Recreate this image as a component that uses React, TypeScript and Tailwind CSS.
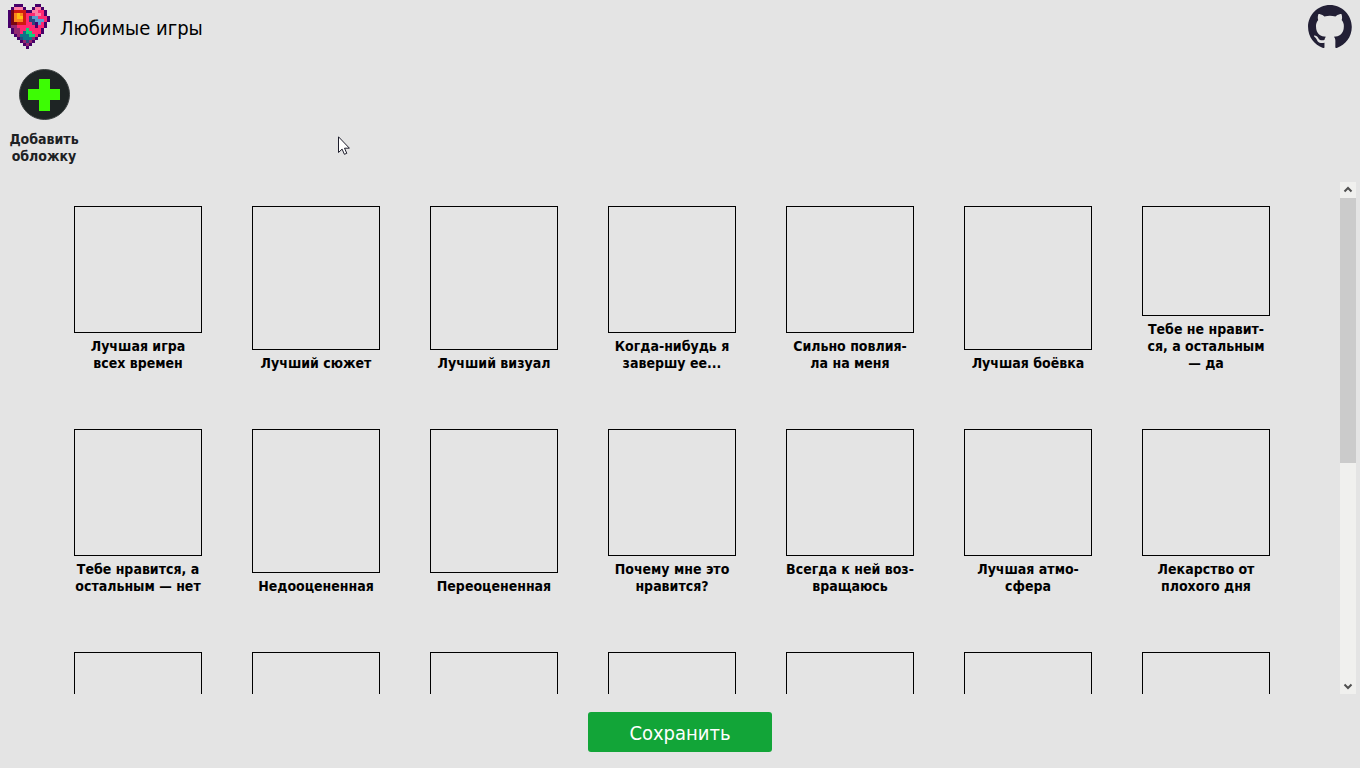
import { useEffect, useRef, useState } from "react";

const HEART = [
  "..PPP....PP...",
  ".PLLLP..PLLP..",
  "PDRRRRPPLLKKP.",
  "PDOYORKKKLLKP.",
  "PDOYYRKNBBKKKP",
  "PDOOORKNNBBBKP",
  "PDDRRRKKNPBKP.",
  "PMMKKKKKKPKKP.",
  ".PMMKKGKKKKP..",
  ".PMMKTGGKKKP..",
  "..PMTTTGGKP...",
  "...PNTTTMP....",
  "....PMNMP.....",
  ".....PMP......",
  "......P.......",
];

const HEART_COLORS: Record<string, string> = {
  P: "#46006a",
  L: "#ff7fa3",
  K: "#ff2872",
  R: "#cf1a12",
  D: "#7a0712",
  O: "#fb861c",
  Y: "#ffbe12",
  B: "#5c9bcd",
  N: "#2b467f",
  G: "#10d07c",
  T: "#0c7688",
  M: "#95286f",
};

const CATEGORIES: string[] = [
  "Лучшая игра\nвсех времен",
  "Лучший сюжет",
  "Лучший визуал",
  "Когда-нибудь я\nзавершу ее...",
  "Сильно повлия-\nла на меня",
  "Лучшая боёвка",
  "Тебе не нравит-\nся, а остальным\n— да",
  "Тебе нравится, а\nостальным — нет",
  "Недооцененная",
  "Переоцененная",
  "Почему мне это\nнравится?",
  "Всегда к ней воз-\nвращаюсь",
  "Лучшая атмо-\nсфера",
  "Лекарство от\nплохого дня",
  ...Array<string>(14).fill(""),
];

function HeartLogo() {
  return (
    <svg className="h-[45px] w-[42px]" viewBox="0 0 14 15" shapeRendering="crispEdges" aria-hidden="true">
      {HEART.flatMap((row, y) =>
        row.split("").map((c, x) =>
          c === "." ? null : <rect key={`${x}-${y}`} x={x} y={y} width="1" height="1" fill={HEART_COLORS[c]} />
        )
      )}
    </svg>
  );
}

function GithubMark() {
  return (
    <svg className="h-[43px] w-11" viewBox="0 0 98 96" fill="#221f35" aria-hidden="true">
      <path d="M48.854 0C21.839 0 0 22 0 49.217c0 21.756 13.993 40.172 33.405 46.69 2.427.49 3.316-1.059 3.316-2.362 0-1.141-.08-5.052-.08-9.127-13.59 2.934-16.42-5.867-16.42-5.867-2.184-5.704-5.42-7.17-5.42-7.17-4.448-3.015.324-3.015.324-3.015 4.934.326 7.523 5.052 7.523 5.052 4.367 7.496 11.404 5.378 14.235 4.074.404-3.178 1.699-5.378 3.074-6.6-10.839-1.141-22.243-5.378-22.243-24.283 0-5.378 1.94-9.778 5.014-13.2-.485-1.222-2.184-6.275.486-13.038 0 0 4.125-1.304 13.426 5.052a46.97 46.97 0 0 1 12.214-1.63c4.125 0 8.33.571 12.213 1.63 9.302-6.356 13.427-5.052 13.427-5.052 2.67 6.763.97 11.816.485 13.038 3.155 3.422 5.015 7.822 5.015 13.2 0 18.905-11.404 23.06-22.324 24.283 1.78 1.548 3.316 4.481 3.316 9.126 0 6.6-.08 11.897-.08 13.526 0 1.304.89 2.853 3.316 2.364 19.412-6.52 33.405-24.935 33.405-46.691C97.707 22 75.788 0 48.854 0z" />
    </svg>
  );
}

function Slot({ label }: { label: string }) {
  return (
    <li className="flex h-[173px] w-32 flex-col pb-[7px]">
      <div className="flex-1 border border-black" />
      <p className="mt-[5px] min-h-[17px] text-center text-sm leading-[17px] font-bold whitespace-pre text-black">
        {label}
      </p>
    </li>
  );
}

function ScrollArrow({ up, onClick }: { up: boolean; onClick: () => void }) {
  return (
    <button
      type="button"
      aria-label={up ? "Вверх" : "Вниз"}
      onClick={onClick}
      className="flex h-4 w-4 shrink-0 items-center justify-center"
    >
      <svg className="h-4 w-4" viewBox="0 0 16 16" fill="none" stroke="#505050" strokeWidth="2" aria-hidden="true">
        <path d={up ? "M4.5 9.5 8 6l3.5 3.5" : "M4.5 6.5 8 10l3.5-3.5"} />
      </svg>
    </button>
  );
}

function SlotList() {
  const list = useRef<HTMLDivElement>(null);
  const [thumb, setThumb] = useState({ size: 0, offset: 0 });

  const measure = () => {
    const el = list.current;
    if (!el) return;
    setThumb({
      size: (el.clientHeight / el.scrollHeight) * 100,
      offset: (el.scrollTop / el.scrollHeight) * 100,
    });
  };

  useEffect(() => {
    measure();
    window.addEventListener("resize", measure);
    return () => window.removeEventListener("resize", measure);
  }, []);

  const scrollBy = (top: number) => list.current?.scrollBy({ top, behavior: "smooth" });

  return (
    <main className="mx-1 flex min-h-0 flex-1">
      <div ref={list} onScroll={measure} className="flex-1 overflow-y-auto [scrollbar-width:none]">
        <ul className="flex flex-wrap justify-center gap-[50px] px-10 pt-6 pb-[62px]">
          {CATEGORIES.map((label, i) => (
            <Slot key={i} label={label} />
          ))}
        </ul>
      </div>
      <div className="flex w-4 flex-col bg-[#f0f0ee]">
        <ScrollArrow up onClick={() => scrollBy(-100)} />
        <div className="flex-1">
          <div style={{ height: `${thumb.offset}%` }} />
          <div className="bg-[#cbcbcb]" style={{ height: `${thumb.size}%` }} />
        </div>
        <ScrollArrow up={false} onClick={() => scrollBy(100)} />
      </div>
    </main>
  );
}

export default function App() {
  return (
    <div className="relative flex h-screen flex-col bg-[#e4e4e4] font-['DejaVu_Sans_Condensed','DejaVu_Sans',sans-serif]">
      <header className="flex h-[53px] items-center justify-between px-2">
        <div className="flex items-center gap-2.5">
          <HeartLogo />
          <h1 className="pt-0.5 text-xl text-black">Любимые игры</h1>
        </div>
        <a href="https://github.com" aria-label="GitHub">
          <GithubMark />
        </a>
      </header>

      <section className="flex h-[129px] items-start px-2 pt-[15px]">
        <button type="button" className="flex w-[72px] flex-col items-center text-sm leading-[17px] font-bold text-[#1d2123]">
          <svg className="mb-[11px] h-[52px] w-[52px]" viewBox="0 0 52 52" aria-hidden="true">
            <circle cx="26.5" cy="26.5" r="25" fill="#1e2424" stroke="#3b4040" />
            <path d="M21 11h11v10h10v11H32v11H21V32H10V21h11z" fill="#3dfc04" />
          </svg>
          <span>Добавить</span>
          <span>обложку</span>
        </button>
      </section>

      <SlotList />

      <footer className="flex h-[74px] items-start justify-center pt-[18px]">
        <button type="button" className="h-10 w-46 rounded-[3px] bg-[#12a538] pt-0.5 text-xl text-white">
          Сохранить
        </button>
      </footer>

      <svg className="pointer-events-none absolute top-[136px] left-[338px] h-[19px] w-3" viewBox="0 0 12 19" aria-hidden="true">
        <path
          d="M.5.8v15.7l3.6-3.4 2.3 5.2 2.4-1-2.3-5.1h4.9z"
          fill="#fff"
          stroke="#1e1e2c"
          strokeWidth="1"
        />
      </svg>
    </div>
  );
}
